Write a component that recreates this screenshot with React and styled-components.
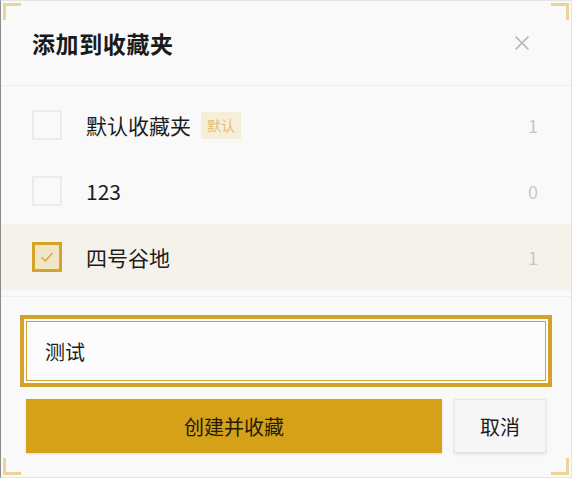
import React, { useState } from "react";
import styled, { createGlobalStyle } from "styled-components";

const Global = createGlobalStyle`
  html, body { margin: 0; padding: 0; background: #f9f9f9; }
  * { box-sizing: border-box; }
  body { font-family: "Noto Sans CJK SC", "Noto Sans", sans-serif; }
`;

const Frame = styled.div`
  position: relative;
  width: 572px;
  height: 478px;
  background: #f9f9f9;
  border: 1px solid #e4e4e4;
  border-left-color: #8c8c8c;
  display: flex;
  flex-direction: column;
`;

const Corner = styled.span`
  position: absolute;
  width: 18px;
  height: 17px;
  border-color: #ecd39a;
  border-style: solid;
  border-width: 0;
  ${(p) => (p.$v === "top" ? "top: 2px;" : "bottom: 2px;")}
  ${(p) => (p.$h === "left" ? "left: 2px;" : "right: 2px;")}
  ${(p) => `border-${p.$v}-width: 3px; border-${p.$h}-width: 3px;`}
`;

const Header = styled.div`
  height: 85px;
  flex: none;
  display: flex;
  align-items: center;
  justify-content: space-between;
  padding: 0 40px 0 31px;
  border-bottom: 1px solid #ececec;
`;

const Title = styled.h1`
  margin: 0;
  font-size: 23px;
  font-weight: 700;
  color: #1a1a1a;
  letter-spacing: 0.6px;
`;

const Close = styled.button`
  border: none;
  background: none;
  padding: 0;
  width: 18px;
  height: 18px;
  display: flex;
  align-items: center;
  justify-content: center;
  cursor: pointer;
`;

const List = styled.div`
  padding: 6px 0;
  border-bottom: 1px solid #eeeeee;
`;

const Row = styled.div`
  height: 66px;
  display: flex;
  align-items: center;
  padding: 0 33px 0 31px;
  background: ${(p) => (p.$active ? "#f5f2eb" : "transparent")};
  cursor: pointer;
`;

const Box = styled.span`
  width: 30px;
  height: 30px;
  flex: none;
  display: flex;
  align-items: center;
  justify-content: center;
  border: ${(p) => (p.$checked ? "3px solid #d6a326" : "2px solid #ebebeb")};
  background: ${(p) => (p.$checked ? "#f1e5c8" : "transparent")};
`;

const Name = styled.span`
  margin-left: 24px;
  font-size: 21px;
  color: #1c1c1c;
`;

const Badge = styled.span`
  margin-left: 10px;
  height: 27px;
  padding: 0 6px;
  display: inline-flex;
  align-items: center;
  font-size: 14px;
  color: #e2bf73;
  background: #f7eed8;
`;

const Count = styled.span`
  margin-left: auto;
  font-size: 18px;
  color: #c6c6c6;
`;

const Form = styled.div`
  padding: 18px 19px 0 19px;
`;

const InputWrap = styled.div`
  height: 72px;
  border: 4px solid #d4a22a;
  box-shadow: inset 0 0 0 2px #fcfcfc, inset 0 0 0 3px #d4a22a;
  background: #fcfcfc;
  display: flex;
  align-items: center;
  padding: 0 21px;
`;

const Input = styled.input`
  border: none;
  outline: none;
  background: transparent;
  font-family: inherit;
  font-size: 20px;
  color: #1c1c1c;
  width: 100%;
  padding: 0;
  caret-color: #000;
`;

const Actions = styled.div`
  display: flex;
  gap: 12px;
  margin-top: 12px;
  padding: 0 6px 0 6px;
`;

const Primary = styled.button`
  width: 416px;
  height: 54px;
  border: none;
  background: #d4a118;
  color: #231b08;
  font-family: inherit;
  font-size: 20px;
  box-shadow: 0 1px 2px rgba(0, 0, 0, 0.12);
  cursor: pointer;
`;

const Secondary = styled.button`
  width: 92px;
  height: 54px;
  border: 1px solid #e6e6e6;
  background: #f7f7f7;
  color: #1c1c1c;
  font-family: inherit;
  font-size: 20px;
  box-shadow: 0 1px 3px rgba(0, 0, 0, 0.12);
  cursor: pointer;
`;

const folders = [
  { name: "默认收藏夹", count: 1, isDefault: true },
  { name: "123", count: 0 },
  { name: "四号谷地", count: 1 },
];

export default function App() {
  const [checked, setChecked] = useState([false, false, true]);
  const [value, setValue] = useState("测试");
  return (
    <>
      <Global />
      <Frame>
        <Corner $v="top" $h="left" />
        <Corner $v="top" $h="right" />
        <Corner $v="bottom" $h="left" />
        <Corner $v="bottom" $h="right" />
        <Header>
          <Title>添加到收藏夹</Title>
          <Close aria-label="关闭">
            <svg width="16" height="16" viewBox="0 0 16 16">
              <path d="M1.5 1.5 L14.5 14.5 M14.5 1.5 L1.5 14.5" stroke="#b4b4b4" strokeWidth="1.6" fill="none" />
            </svg>
          </Close>
        </Header>
        <List>
          {folders.map((f, i) => (
            <Row
              key={f.name}
              $active={checked[i]}
              onClick={() => setChecked((c) => c.map((v, j) => (j === i ? !v : v)))}
            >
              <Box $checked={checked[i]}>
                {checked[i] && (
                  <svg width="14" height="12" viewBox="0 0 14 12">
                    <path d="M1.5 6.5 L5.5 10 L12.5 2" stroke="#d6a838" strokeWidth="1.5" fill="none" />
                  </svg>
                )}
              </Box>
              <Name>{f.name}</Name>
              {f.isDefault && <Badge>默认</Badge>}
              <Count>{f.count}</Count>
            </Row>
          ))}
        </List>
        <Form>
          <InputWrap>
            <Input value={value} onChange={(e) => setValue(e.target.value)} autoFocus />
          </InputWrap>
          <Actions>
            <Primary>创建并收藏</Primary>
            <Secondary>取消</Secondary>
          </Actions>
        </Form>
      </Frame>
    </>
  );
}
